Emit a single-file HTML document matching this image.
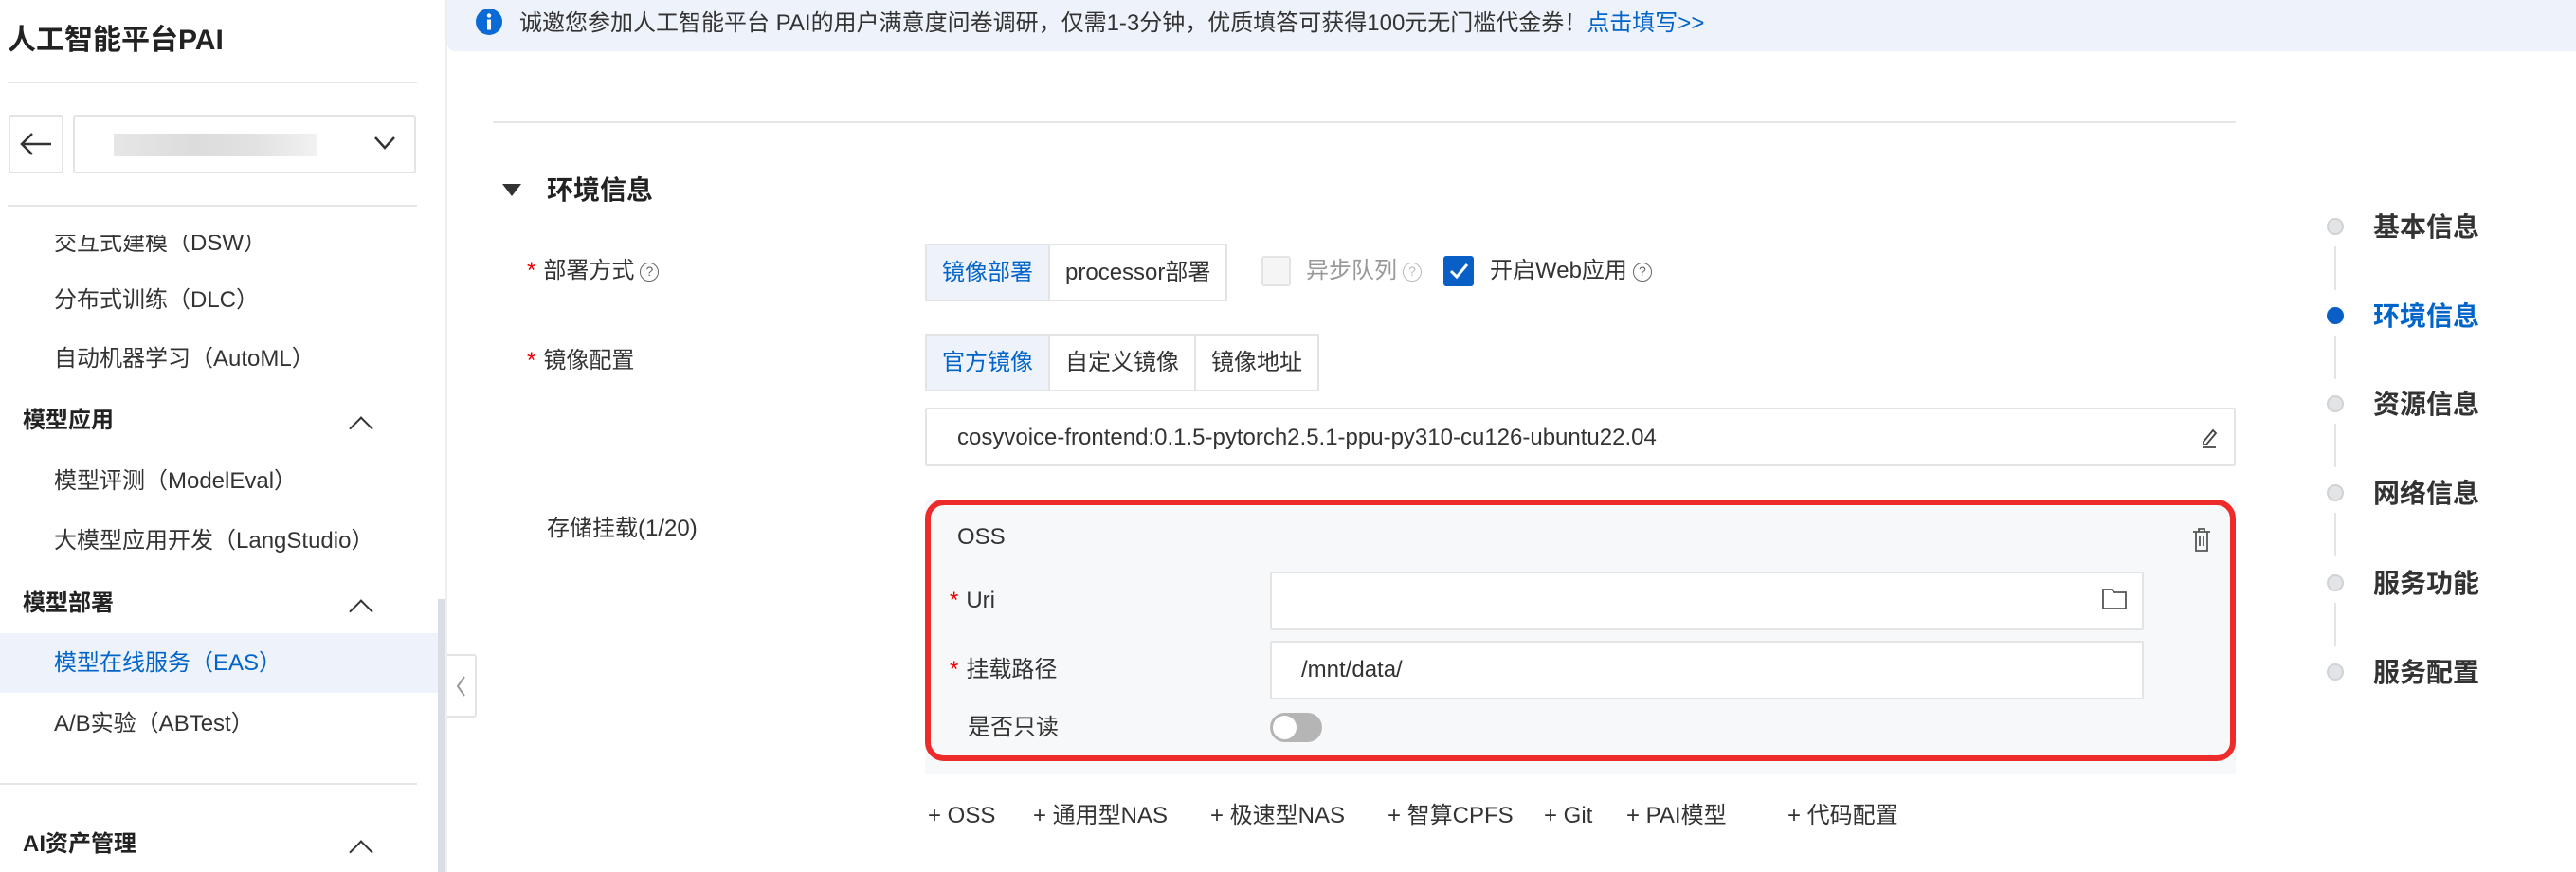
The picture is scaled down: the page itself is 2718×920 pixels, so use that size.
<!DOCTYPE html>
<html><head><meta charset="utf-8"><style>
*{margin:0;padding:0;box-sizing:border-box}
body{width:2718px;height:920px;overflow:hidden;background:#fff;font-family:"Liberation Sans","Noto Sans CJK SC",sans-serif;color:#333;font-size:24px;position:relative}
.a{position:absolute;white-space:nowrap}
.t{line-height:40px;height:40px;margin-top:-20px}
.grey{color:#999}
.blue{color:#0064c8}
.star{color:#e00;margin-right:8px}
.q{display:inline-block;width:20px;height:20px;border:1.5px solid #666;border-radius:50%;font-size:14px;line-height:17px;text-align:center;vertical-align:middle;margin-left:6px;color:#666}
.seg{position:absolute;border:2px solid #e3e4e6;display:flex;height:61px}
.seg div{padding:0 16px;line-height:57px;border-right:2px solid #e3e4e6;background:#fff}
.seg div:last-child{border-right:none}
.seg .on{background:#eef2fb;color:#0064c8}
.inp{position:absolute;background:#fff;border:2px solid #e3e4e6;border-radius:2px}
.dot{position:absolute;width:18px;height:18px;border-radius:50%;background:#e3e4e6;border:2px solid #cfd2d6;left:2455px}
.vl{position:absolute;left:2463px;width:2px;background:#e3e4e6;height:46px}
.chev{position:absolute;left:372px;width:18px;height:18px;border-left:2.5px solid #333;border-top:2.5px solid #333;transform:rotate(45deg)}
</style></head><body>
<!-- sidebar -->
<div class="a t" style="left:8px;top:43px;font-size:30px;font-weight:600;color:#222">人工智能平台PAI</div>
<div class="a" style="left:8px;top:86px;width:432px;height:2px;background:#e5e6e8"></div>
<div class="a" style="left:9px;top:121px;width:58px;height:62px;border:2px solid #e3e4e6;border-radius:3px"></div>
<svg class="a" style="left:20px;top:138px" width="36" height="28" viewBox="0 0 36 28"><path d="M34 14H3M14 3L3 14l11 11" fill="none" stroke="#333" stroke-width="2.5"/></svg>
<div class="a" style="left:77px;top:121px;width:362px;height:62px;border:2px solid #e3e4e6;border-radius:3px"></div>
<div class="a" style="left:120px;top:141px;width:215px;height:24px;background:linear-gradient(90deg,#e6e6e6,#dcdcdc 40%,#e2e2e2 70%,#f2f2f2)"></div>
<svg class="a" style="left:394px;top:143px" width="24" height="16" viewBox="0 0 24 16"><path d="M2 2l10 11L22 2" fill="none" stroke="#333" stroke-width="2.5"/></svg>
<div class="a" style="left:8px;top:216px;width:432px;height:2px;background:#e5e6e8"></div>
<div class="a" style="left:0;top:248px;width:462px;height:18px;overflow:hidden"><div class="a" style="left:57px;top:-11px;line-height:40px">交互式建模（DSW）</div></div>
<div class="a t" style="left:57px;top:317px">分布式训练（DLC）</div>
<div class="a t" style="left:57px;top:379px">自动机器学习（AutoML）</div>
<div class="a t" style="left:24px;top:444px;font-weight:700;color:#222">模型应用</div>
<div class="chev" style="top:443px"></div>
<div class="a t" style="left:57px;top:508px">模型评测（ModelEval）</div>
<div class="a t" style="left:57px;top:571px">大模型应用开发（LangStudio）</div>
<div class="a t" style="left:24px;top:637px;font-weight:700;color:#222">模型部署</div>
<div class="chev" style="top:636px"></div>
<div class="a" style="left:0;top:668px;width:462px;height:63px;background:#eef2fb"></div>
<div class="a t blue" style="left:57px;top:700px">模型在线服务（EAS）</div>
<div class="a t" style="left:57px;top:764px">A/B实验（ABTest）</div>
<div class="a" style="left:0;top:826px;width:440px;height:2px;background:#e5e6e8"></div>
<div class="a t" style="left:24px;top:891px;font-weight:700;color:#222">AI资产管理</div>
<div class="chev" style="top:890px"></div>
<div class="a" style="left:462px;top:632px;width:8px;height:288px;background:#d8dde6"></div>
<div class="a" style="left:470px;top:0;width:2px;height:920px;background:#eceef0"></div>
<div class="a" style="left:472px;top:690px;width:31px;height:67px;border:2px solid #e3e4e6;border-left:none;border-radius:0 3px 3px 0;background:#fff"></div>
<svg class="a" style="left:480px;top:712px" width="12" height="24" viewBox="0 0 12 24"><path d="M10 2L3 12l7 10" fill="none" stroke="#999" stroke-width="2"/></svg>
<!-- banner -->
<div class="a" style="left:472px;top:0;width:2246px;height:54px;background:#eef2fa;border-radius:0 0 0 8px"></div>
<svg class="a" style="left:502px;top:9px" width="28" height="28" viewBox="0 0 28 28"><circle cx="14" cy="14" r="14" fill="#0a6bd6"/><circle cx="14" cy="7.5" r="2.2" fill="#fff"/><rect x="12" y="11.5" width="4" height="11" fill="#fff"/></svg>
<div class="a t" style="left:548px;top:25px">诚邀您参加人工智能平台 PAI的用户满意度问卷调研，仅需1-3分钟，优质填答可获得100元无门槛代金券！<span class="blue">点击填写&gt;&gt;</span></div>
<!-- content -->
<div class="a" style="left:520px;top:128px;width:1839px;height:2px;background:#e5e6e8"></div>
<svg class="a" style="left:530px;top:194px" width="20" height="14" viewBox="0 0 20 14"><path d="M0 0h20L10 13z" fill="#333"/></svg>
<div class="a t" style="left:577px;top:201px;font-size:28px;font-weight:600;color:#222">环境信息</div>
<div class="a t" style="left:556px;top:286px"><span class="star">*</span>部署方式<span class="q">?</span></div>
<div class="seg" style="left:976px;top:257px"><div class="on">镜像部署</div><div>processor部署</div></div>
<div class="a" style="left:1331px;top:270px;width:31px;height:32px;border:2px solid #e3e4e6;background:#f5f5f5;border-radius:3px"></div>
<div class="a t grey" style="left:1378px;top:286px">异步队列<span class="q" style="border-color:#bbb;color:#bbb">?</span></div>
<div class="a" style="left:1523px;top:270px;width:32px;height:32px;background:#0a5fc6;border-radius:3px"></div>
<svg class="a" style="left:1523px;top:270px" width="32" height="32" viewBox="0 0 32 32"><path d="M8 16l6 6 11-13" fill="none" stroke="#fff" stroke-width="3"/></svg>
<div class="a t" style="left:1572px;top:286px">开启Web应用<span class="q">?</span></div>
<div class="a t" style="left:556px;top:381px"><span class="star">*</span>镜像配置</div>
<div class="seg" style="left:976px;top:352px"><div class="on">官方镜像</div><div>自定义镜像</div><div>镜像地址</div></div>
<div class="inp" style="left:976px;top:430px;width:1383px;height:62px"></div>
<div class="a t" style="left:1010px;top:462px">cosyvoice-frontend:0.1.5-pytorch2.5.1-ppu-py310-cu126-ubuntu22.04</div>
<svg class="a" style="left:2320px;top:450px" width="22" height="24" viewBox="0 0 22 24"><path d="M5 16l10-12 3 3-10 12H5z M4 22h14" fill="none" stroke="#444" stroke-width="1.8"/></svg>
<div class="a t" style="left:577px;top:558px">存储挂载(1/20)</div>
<div class="a" style="left:976px;top:527px;width:1383px;height:290px;background:#f7f8fa"></div>
<div class="a" style="left:976px;top:527px;width:1383px;height:276px;border:6px solid #ee2b2b;border-radius:20px"></div>
<div class="a t" style="left:1010px;top:567px">OSS</div>
<svg class="a" style="left:2312px;top:555px" width="22" height="28" viewBox="0 0 22 28"><path d="M2 6h18M8 6V3h6v3M5 6v20h12V6M9 11v10M13 11v10" fill="none" stroke="#555" stroke-width="1.8"/></svg>
<div class="a t" style="left:1002px;top:634px"><span class="star">*</span>Uri</div>
<div class="inp" style="left:1340px;top:603px;width:922px;height:62px"></div>
<svg class="a" style="left:2217px;top:620px" width="28" height="24" viewBox="0 0 28 24"><path d="M2 2h9l3 3h12v17H2z" fill="none" stroke="#555" stroke-width="1.8"/></svg>
<div class="a t" style="left:1002px;top:707px"><span class="star">*</span>挂载路径</div>
<div class="inp" style="left:1340px;top:676px;width:922px;height:62px"></div>
<div class="a t" style="left:1373px;top:707px">/mnt/data/</div>
<div class="a t" style="left:1021px;top:768px">是否只读</div>
<div class="a" style="left:1340px;top:752px;width:55px;height:31px;border-radius:16px;background:#b5b5b5"></div>
<div class="a" style="left:1343px;top:755px;width:25px;height:25px;border-radius:50%;background:#fff"></div>
<div class="a t" style="left:979px;top:861px">+ OSS</div>
<div class="a t" style="left:1090px;top:861px">+ 通用型NAS</div>
<div class="a t" style="left:1277px;top:861px">+ 极速型NAS</div>
<div class="a t" style="left:1464px;top:861px">+ 智算CPFS</div>
<div class="a t" style="left:1629px;top:861px">+ Git</div>
<div class="a t" style="left:1716px;top:861px">+ PAI模型</div>
<div class="a t" style="left:1886px;top:861px">+ 代码配置</div>
<!-- anchor nav -->
<div class="dot" style="top:230px"></div><div class="vl" style="top:260px"></div>
<div class="dot" style="top:324px;background:#0a5fc6;border-color:#0a5fc6"></div><div class="vl" style="top:354px"></div>
<div class="dot" style="top:417px"></div><div class="vl" style="top:447px"></div>
<div class="dot" style="top:511px"></div><div class="vl" style="top:541px"></div>
<div class="dot" style="top:606px"></div><div class="vl" style="top:636px"></div>
<div class="dot" style="top:700px"></div>
<div class="a t" style="left:2504px;top:240px;font-size:28px;font-weight:600">基本信息</div>
<div class="a t blue" style="left:2504px;top:334px;font-size:28px;font-weight:600">环境信息</div>
<div class="a t" style="left:2504px;top:427px;font-size:28px;font-weight:600">资源信息</div>
<div class="a t" style="left:2504px;top:521px;font-size:28px;font-weight:600">网络信息</div>
<div class="a t" style="left:2504px;top:616px;font-size:28px;font-weight:600">服务功能</div>
<div class="a t" style="left:2504px;top:710px;font-size:28px;font-weight:600">服务配置</div>
</body></html>
